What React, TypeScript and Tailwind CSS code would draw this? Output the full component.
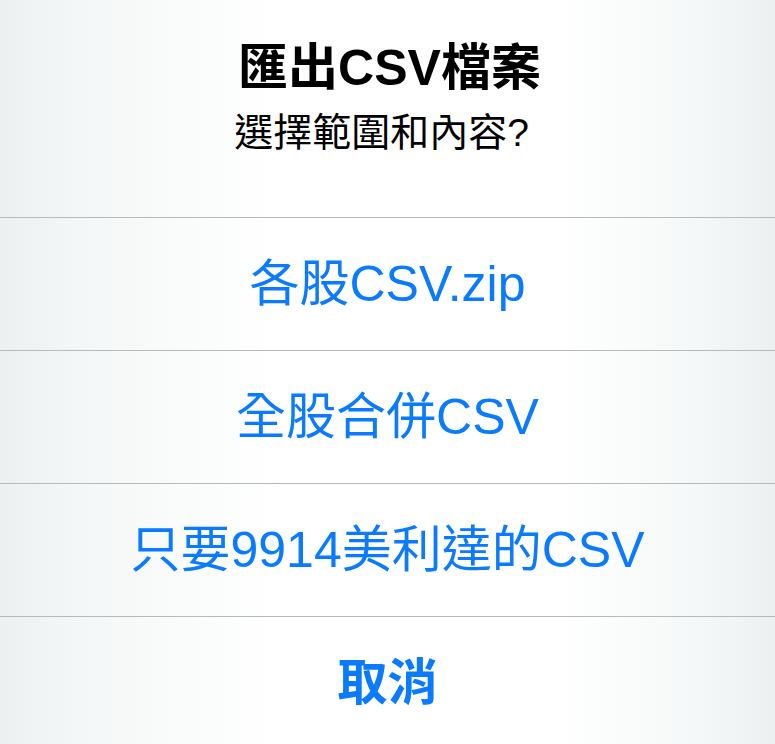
const actions = [
  { label: "各股CSV.zip", bold: false },
  { label: "全股合併CSV", bold: false },
  { label: "只要9914美利達的CSV", bold: false },
  { label: "取消", bold: true },
];

export default function App() {
  return (
    <div className="h-[744px] w-[775px] overflow-hidden bg-[linear-gradient(90deg,#edf0f0_0%,#f4f7f7_10%,#ffffff_36%,#ffffff_72%,#f5f8f8_90%,#edf0f0_100%)] font-['Liberation_Sans','Noto_Sans_CJK_TC',sans-serif]">
      <div className="flex h-[217px] flex-col items-center pt-[38px]">
        <h1 className="pl-[4px] text-[50px] font-bold leading-[60px] text-black">匯出CSV檔案</h1>
        <p className="mt-[12px] pr-[12px] text-[39px] leading-[46px] text-black">選擇範圍和內容?</p>
      </div>
      {actions.map((a) => (
        <div
          key={a.label}
          className="flex h-[133px] items-center justify-center border-t border-[#b6baba]"
        >
          <span className={`text-[50px] leading-[60px] text-[#0a7aff] ${a.bold ? "font-bold" : "font-normal"}`}>
            {a.label}
          </span>
        </div>
      ))}
    </div>
  );
}
